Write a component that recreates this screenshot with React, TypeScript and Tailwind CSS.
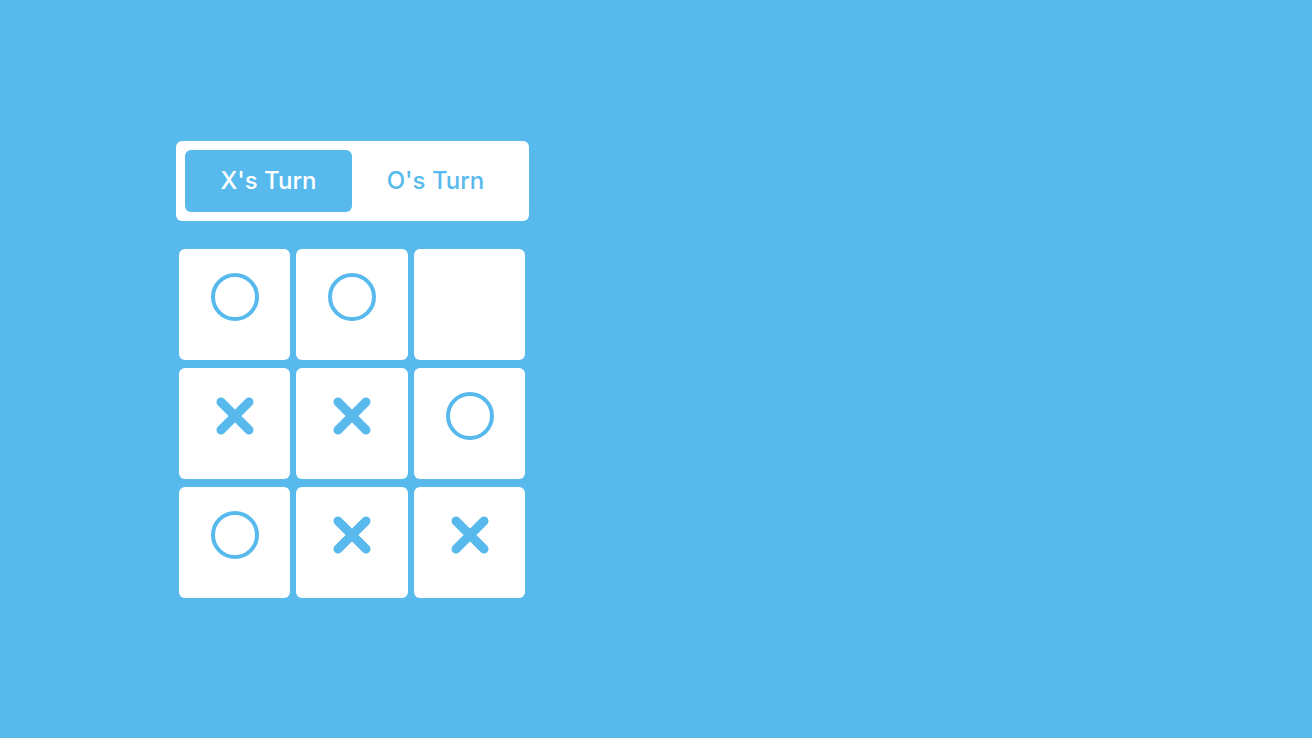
const BLUE = '#58baec'

type Mark = 'X' | 'O' | null

const board: Mark[] = ['O', 'O', null, 'X', 'X', 'O', 'O', 'X', 'X']

function OMark() {
  return (
    <svg width="52" height="52" viewBox="0 0 52 52" className="-mt-[15px]">
      <circle cx="26" cy="26" r="22" fill="none" stroke={BLUE} strokeWidth="4" />
    </svg>
  )
}

function XMark() {
  return (
    <svg width="40" height="40" viewBox="0 0 40 40" className="-mt-[16px]">
      <path d="M6 6 L34 34 M34 6 L6 34" stroke={BLUE} strokeWidth="9" strokeLinecap="round" />
    </svg>
  )
}

export default function App() {
  return (
    <div
      className="w-full h-[738px] bg-[#58baec] pt-[141px] pl-[176px]"
      style={{ fontFamily: 'Inter, "Open Sans", sans-serif' }}
    >
      <div className="w-[353px] h-[80px] bg-white rounded-md p-[9px] flex">
        <button className="w-[167px] h-[62px] bg-[#58baec] rounded-md text-white text-[24px] font-medium">
          X's Turn
        </button>
        <button className="w-[167px] h-[62px] text-[#58baec] text-[24px] font-medium">
          O's Turn
        </button>
      </div>
      <div className="mt-[28px] ml-[3px] grid grid-cols-[111px_112px_111px] gap-x-[6px] gap-y-[8px] w-fit">
        {board.map((m, i) => (
          <div key={i} className="h-[111px] bg-white rounded-md flex items-center justify-center">
            {m === 'O' && <OMark />}
            {m === 'X' && <XMark />}
          </div>
        ))}
      </div>
    </div>
  )
}
